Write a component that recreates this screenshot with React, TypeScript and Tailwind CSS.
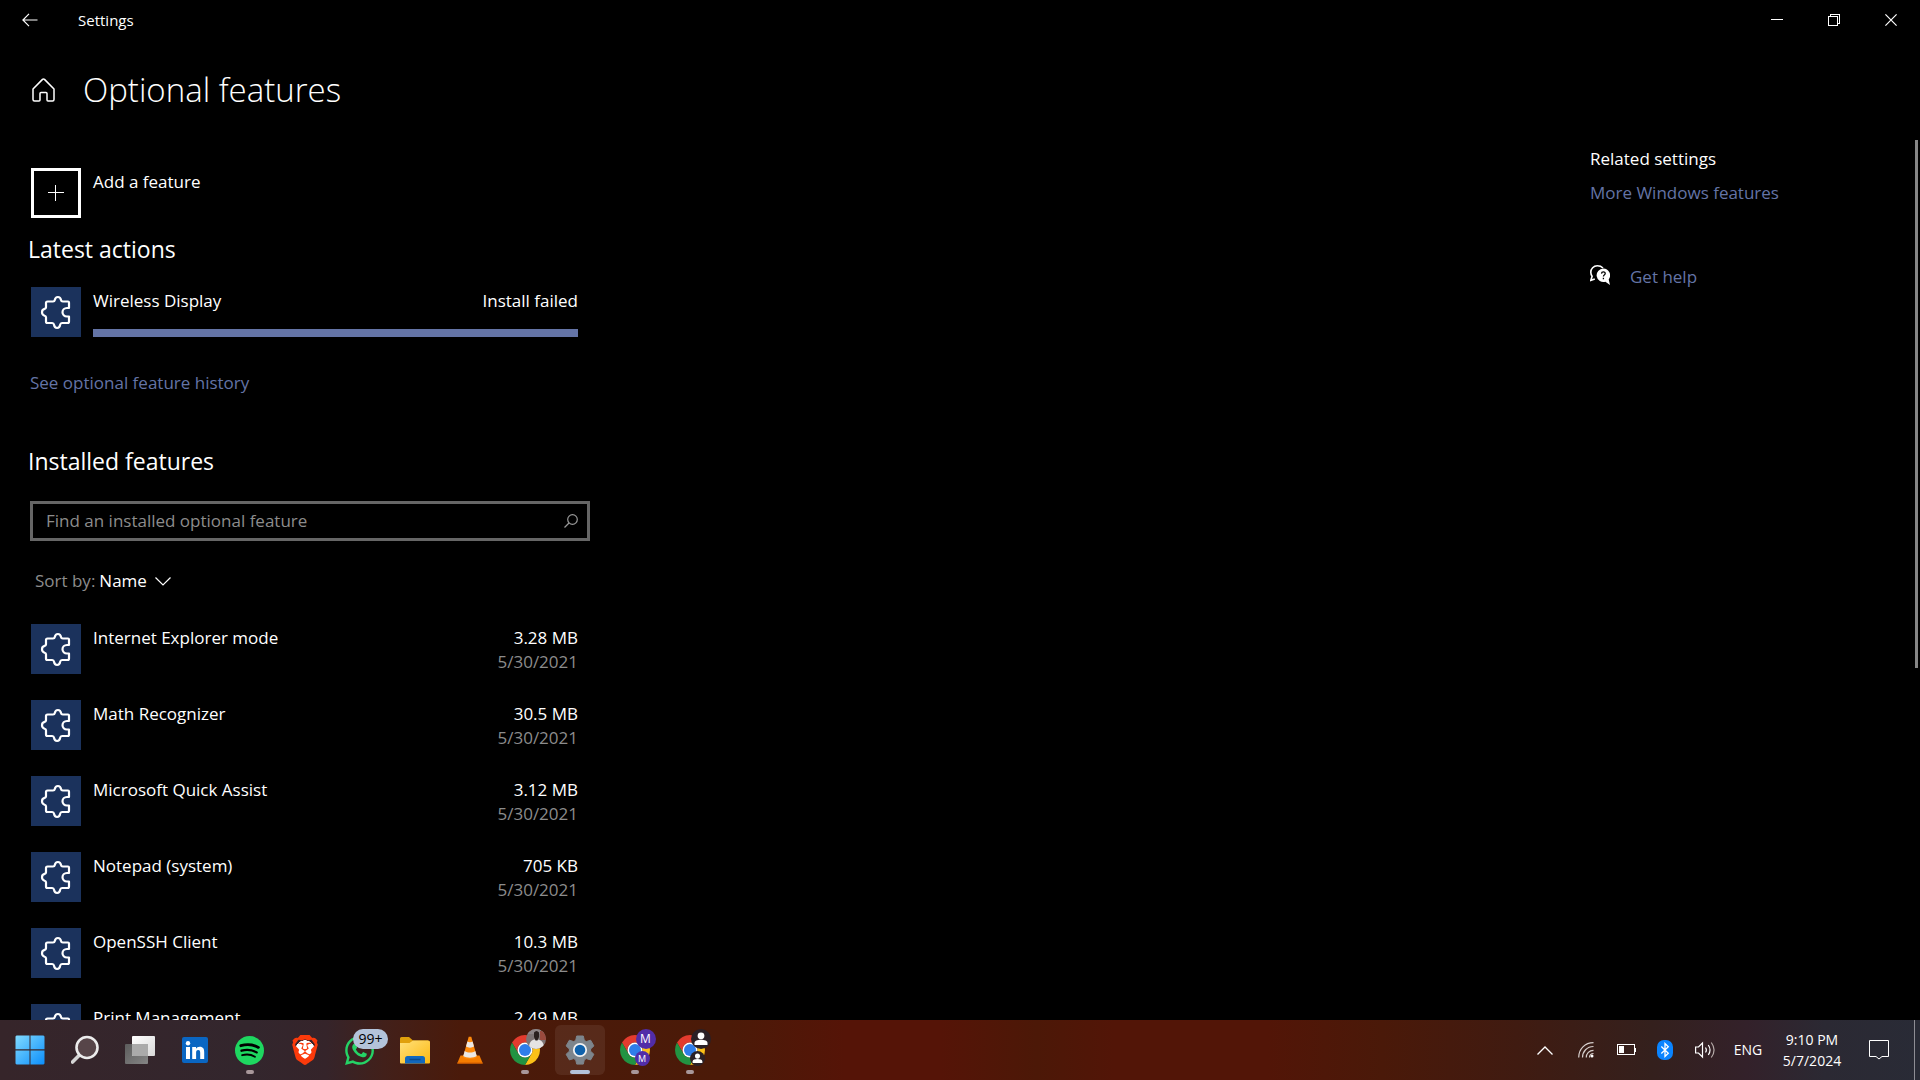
import { useState } from "react";
import type { ReactNode } from "react";
import { FaWhatsapp } from "react-icons/fa";
import { SiBrave } from "react-icons/si";

const installedFeatures = [
  { name: "Internet Explorer mode", size: "3.28 MB", date: "5/30/2021" },
  { name: "Math Recognizer", size: "30.5 MB", date: "5/30/2021" },
  { name: "Microsoft Quick Assist", size: "3.12 MB", date: "5/30/2021" },
  { name: "Notepad (system)", size: "705 KB", date: "5/30/2021" },
  { name: "OpenSSH Client", size: "10.3 MB", date: "5/30/2021" },
  { name: "Print Management", size: "2.49 MB", date: "5/30/2021" },
];

const FeatureIcon = () => (
  <svg
    viewBox="0 0 50 50"
    className="size-[50px] shrink-0 bg-[#1b325c]"
    fill="none"
    stroke="white"
    strokeWidth="2.2"
    strokeLinejoin="round"
  >
    <path d="M15 16q0-1.500 1.500-1.500H22c1.200 0 1.600-.4 1.800-1.500.4-2.200 1.400-3 3.100-3s2.700.8 3.100 3c.2 1.100.6 1.500 1.800 1.500H37q1 0 1 1V21h-2c-2.700 0-4.500 2-4.500 4.300s1.800 4.200 4.500 4.200h2v5q0 1.500-1.500 1.500H31c-1.200 0-1.600.5-1.800 1.600-.4 2.400-1.400 3.400-3.100 3.400s-2.700-1-3.100-3.400c-.2-1.100-.6-1.600-1.800-1.600H16.500q-1.500 0-1.500-1.500v-4.200c0-1-.3-1.300-1.400-1.600-1.800-.5-2.600-1.800-2.600-3.400s.8-2.900 2.600-3.400c1.100-.3 1.400-.6 1.400-1.600z" />
  </svg>
);

/* Title bar */
const TitleBar = () => (
  <header className="flex h-10 shrink-0 items-center pr-px">
    <button type="button" aria-label="Back" className="flex h-10 w-[60px] items-center justify-center">
      <svg width="16" height="14" viewBox="0 0 16 14" fill="none" stroke="white" strokeWidth="1.2">
        <path d="M15.500 7H1M7 .8.9 7 7 13.200" />
      </svg>
    </button>
    <span className="ml-[18px] text-[15px]">Settings</span>
    <div className="ml-auto flex">
      <button type="button" aria-label="Minimize" className="flex h-10 w-[57px] items-center justify-center">
        <svg width="12" height="12" shapeRendering="crispEdges" stroke="white">
          <path d="M0 5.500h12" />
        </svg>
      </button>
      <button type="button" aria-label="Restore" className="flex h-10 w-[57px] items-center justify-center">
        <svg width="12" height="12" shapeRendering="crispEdges" fill="none" stroke="white">
          <path d="M.5 2.500h9v9h-9zM2.500 2.500v-2h9v9h-2" />
        </svg>
      </button>
      <button type="button" aria-label="Close" className="flex h-10 w-[57px] items-center justify-center">
        <svg width="12" height="12" fill="none" stroke="white" strokeWidth="1.2">
          <path d="m.4.4 11.200 11.200M11.600.4.4 11.600" />
        </svg>
      </button>
    </div>
  </header>
);

const RelatedSettings = () => (
  <aside className="w-[325px] shrink-0 pt-[7px]">
    <h2 className="text-[17px] leading-6">Related settings</h2>
    <a href="#" className="mt-[10px] block text-[17px] leading-6 text-[#6474a6]">
      More Windows features
    </a>
    <div className="mt-[60px] flex items-start gap-5">
      <svg width="20" height="20" viewBox="0 0 20 20">
        <path
          d="M13 3C11.500 1.500 9.500.8 7.300.8 3.500.8.8 3.700.8 7.300c0 1.500.5 2.900 1.300 4L.8 15.300l4-1.300"
          fill="none"
          stroke="white"
          strokeWidth="1.600"
        />
        <path d="M13.300 3.500a6.800 6.800 0 0 1 5.400 10.900L20 20l-4.600-3.200A6.800 6.800 0 1 1 13.300 3.500z" fill="white" />
        <path
          d="M11.500 8.600c.1-2.400 3.700-2.300 3.700-.2 0 1.500-1.800 1.500-1.800 3.200M13.400 12.800v1.500"
          fill="none"
          stroke="black"
          strokeWidth="1.300"
        />
      </svg>
      <a href="#" className="text-[17px] leading-6 text-[#6474a6]">
        Get help
      </a>
    </div>
  </aside>
);

const OptionalFeatures = () => {
  const [query, setQuery] = useState("");
  const [sort, setSort] = useState("Name");

  return (
    <main className="min-w-0 flex-1 pl-[31px] pt-7">
      <button type="button" className="flex items-start gap-3 text-left">
        <span className="flex size-[50px] items-center justify-center border-3 border-white">
          <svg width="16" height="16" shapeRendering="crispEdges" stroke="white">
            <path d="M7.500 0v16M0 7.500h16" />
          </svg>
        </span>
        <span className="pt-[2px] text-[17px] leading-6">Add a feature</span>
      </button>

      {/* Latest actions */}
      <h2 className="-ml-[3px] mt-[15px] text-[23px] leading-8">Latest actions</h2>
      <div className="mt-[22px] flex w-[547px] gap-3">
        <FeatureIcon />
        <div className="flex flex-1 flex-col justify-between pt-[2px]">
          <div className="flex justify-between text-[17px] leading-6">
            <span>Wireless Display</span>
            <span>Install failed</span>
          </div>
          <div
            role="progressbar"
            aria-label="Wireless Display"
            aria-valuenow={100}
            className="h-2 bg-[#6474a6]"
          />
        </div>
      </div>
      <a href="#" className="-ml-px mt-[34px] block w-fit text-[17px] leading-6 text-[#6474a6]">
        See optional feature history
      </a>

      {/* Installed features */}
      <h2 className="-ml-[3px] mt-[50px] text-[23px] leading-8">Installed features</h2>
      <div className="mt-6 -ml-px flex h-10 w-[560px] items-center border-3 border-[#666] pl-[13px] pr-[9px]">
        <input
          type="text"
          aria-label="Find an installed optional feature"
          placeholder="Find an installed optional feature"
          value={query}
          onChange={(e) => setQuery(e.target.value)}
          className="min-w-0 flex-1 bg-transparent text-[17px] text-white outline-none placeholder:text-[#8c8c8c]"
        />
        <button type="button" aria-label="Search">
          <svg width="14" height="14" fill="none" stroke="#999" strokeWidth="1.200">
            <circle cx="8.500" cy="5.500" r="4.800" />
            <path d="M5 9 .5 13.500" />
          </svg>
        </button>
      </div>

      <div className="mt-7 flex items-center pl-1 text-[17px] leading-6">
        <label htmlFor="sort" className="text-[#8c8c8c]">
          Sort by:
        </label>
        <div className="relative flex items-center">
          <select
            id="sort"
            value={sort}
            onChange={(e) => setSort(e.target.value)}
            className="appearance-none bg-black pl-1 pr-6 text-white outline-none"
          >
            <option>Name</option>
            <option>Size</option>
          </select>
          <svg
            width="16"
            height="9"
            className="pointer-events-none absolute right-0"
            fill="none"
            stroke="white"
            strokeWidth="1.200"
          >
            <path d="m.5.500 7.500 7.500L15.500.5" />
          </svg>
        </div>
      </div>

      <ul className="mt-[31px] flex w-[547px] flex-col gap-[26px]">
        {installedFeatures.map((feature) => (
          <li key={feature.name} className="flex h-[50px] gap-3 text-[17px] leading-6">
            <FeatureIcon />
            <span className="flex-1 pt-[2px]">{feature.name}</span>
            <div className="pt-[2px] text-right">
              <p>{feature.size}</p>
              <p className="text-[#8c8c8c]">{feature.date}</p>
            </div>
          </li>
        ))}
      </ul>
    </main>
  );
};

/* Taskbar icons */
const StartIcon = () => (
  <svg width="30" height="30" viewBox="0 0 30 30">
    <defs>
      <linearGradient id="start" x1="0" y1="0" x2="30" y2="30" gradientUnits="userSpaceOnUse">
        <stop stopColor="#83dcff" />
        <stop offset="1" stopColor="#0a8dfb" />
      </linearGradient>
    </defs>
    <path
      fill="url(#start)"
      d="M1.500.5H14.500v13.800H.5V1.500zM15.500.5h13l1 1v12.800h-14zM.5 15.500h14v14h-13l-1-1zM15.500 15.500h14v13l-1 1h-13z"
    />
  </svg>
);

const SearchIcon = () => (
  <svg width="28" height="30" viewBox="0 0 28 30" fill="none">
    <path d="m9.500 19-8 8" stroke="#d5d5d5" strokeWidth="3.600" strokeLinecap="round" />
    <circle cx="16" cy="12.500" r="10.500" fill="#574549" stroke="#ececec" strokeWidth="2.600" />
  </svg>
);

const TaskViewIcon = () => (
  <svg width="30" height="28" viewBox="0 0 30 28">
    <defs>
      <linearGradient id="tv-front" x1="0" y1="0" x2="1" y2="1">
        <stop stopColor="#fff" />
        <stop offset="1" stopColor="#d8d8d8" />
      </linearGradient>
      <linearGradient id="tv-back" x1="0" y1="0" x2="1" y2="1">
        <stop stopColor="#5c5c5c" />
        <stop offset="1" stopColor="#858585" />
      </linearGradient>
    </defs>
    <rect y="8" width="23" height="20" rx="1" fill="url(#tv-back)" />
    <rect x="7" width="23" height="20" rx="1" fill="url(#tv-front)" />
    <path d="M7 8h16v12H8q-1 0-1-1z" fill="#aaa" />
  </svg>
);

const LinkedInIcon = () => (
  <svg width="26" height="26" viewBox="0 0 26 26">
    <rect width="26" height="26" rx="2" fill="#0a66c2" />
    <g fill="white">
      <circle cx="6" cy="6.200" r="2.200" />
      <path d="M4 10h4v12H4zM10.200 10H14v1.700c.7-1.200 2-2 3.700-2 3.600 0 4.500 2.300 4.500 5.500V22h-4v-6c0-1.700-.3-3-2-3s-2.100 1.300-2.100 3v6h-3.900z" />
    </g>
  </svg>
);

const SpotifyIcon = () => (
  <svg width="29" height="29" viewBox="0 0 29 29" fill="none" stroke="black" strokeLinecap="round">
    <circle cx="14.500" cy="14.500" r="14.500" fill="#1ed760" stroke="none" />
    <path d="M5.800 9.700c6-1.700 12.500-1.100 17.600 1.700" strokeWidth="2.800" />
    <path d="M6.500 14.700c5.300-1.500 10.700-.8 15.200 1.700" strokeWidth="2.300" />
    <path d="M7.200 19.200c4.400-1.200 9-.7 12.700 1.500" strokeWidth="1.900" />
  </svg>
);

const BraveIcon = () => (
  <span className="flex size-[30px] items-center justify-center bg-[radial-gradient(circle,white_45%,transparent_46%)] text-[#fb3a0b]">
    <SiBrave size={30} />
  </span>
);

const WhatsAppIcon = () => (
  <span className="relative text-[#25d366]">
    <FaWhatsapp size={33} />
    <span className="absolute -right-3 -top-[5px] flex h-5 w-[35px] items-center justify-center rounded-full bg-[#b3c3da] text-sm text-black">
      99+
    </span>
  </span>
);

const ExplorerIcon = () => (
  <svg width="30" height="27" viewBox="0 0 30 27">
    <defs>
      <linearGradient id="folder" x1="0" y1="0" x2="1" y2="1">
        <stop stopColor="#ffe07a" />
        <stop offset="1" stopColor="#fcb912" />
      </linearGradient>
    </defs>
    <path d="M0 1.500Q0 0 1.500 0H9l4 3.500h15V12H0z" fill="#e0a00c" />
    <path d="M0 6h9.500L13 3.500h15.500Q30 3.500 30 5v20.500q0 1-1 1H1q-1 0-1-1z" fill="url(#folder)" />
    <path d="M5 21.500q0-2.500 2.500-2.500h15q2.500 0 2.500 2.500v5H5z" fill="#1268bd" />
    <path d="M9.500 22.500h11" stroke="#0b4a8c" strokeWidth="1.500" />
  </svg>
);

const VlcIcon = () => (
  <svg width="26" height="28" viewBox="0 0 26 28">
    <path d="M3.500 19.500h19L25.800 27.500H.2z" fill="#f57c00" />
    <path d="M11.700.8h2.600L20 21c-1.500 2.600-12.500 2.600-14 0z" fill="#ff8a0c" />
    <path d="M10.400 5.500c1.500 1 3.700 1 5.200 0l1.400 5c-2.300 1.500-5.700 1.500-8 0zM7.700 15c2.800 2 7.800 2 10.600 0l1.400 5c-3 2.300-10.400 2.300-13.400 0z" fill="#ebe8e6" />
    <path d="M.4 27h25.200" stroke="#d45c00" />
  </svg>
);

const ChromeIcon = () => (
  <svg width="30" height="30" viewBox="2 2 44 44">
    <path d="M4.950 13A22 22 0 0 1 43.050 13H24A11 11 0 0 0 14.470 29.500z" fill="#e33b2e" />
    <path d="M43.050 13A22 22 0 0 1 24 46L33.530 29.500A11 11 0 0 0 24 13z" fill="#fcc018" />
    <path d="M24 46A22 22 0 0 1 4.950 13L14.470 29.500A11 11 0 0 0 33.530 29.500z" fill="#229342" />
    <circle cx="24" cy="24" r="11" fill="white" />
    <circle cx="24" cy="24" r="8.800" fill="#2f7de9" />
  </svg>
);

const PhotoChromeIcon = () => (
  <span className="relative">
    <ChromeIcon />
    <svg width="20" height="20" viewBox="0 0 20 20" className="absolute -right-[6px] -top-[6px]">
      <defs>
        <clipPath id="avatar">
          <circle cx="10" cy="10" r="10" />
        </clipPath>
      </defs>
      <g clipPath="url(#avatar)">
        <rect width="20" height="20" fill="#7d7475" />
        <path d="M0 0h20v5H0z" fill="#8d8587" />
        <path d="M14 2h6v9h-6z" fill="#9b4a3d" />
        <path d="M3 20c0-7 2-9.500 7-9.500s8 2 8 9.500z" fill="#e5e3e3" />
        <path d="M8 3.500q2.500-3 5 0v4.500l-1.500 3.500h-2L8 8z" fill="#29201f" />
      </g>
    </svg>
  </span>
);

const ProfileChromeIcon = () => (
  <span className="relative">
    <ChromeIcon />
    <span className="absolute -right-[6px] -top-[6px] flex size-5 items-center justify-center rounded-full bg-[#512da8] text-xs text-white">
      M
    </span>
    <span className="absolute -bottom-px right-0 flex size-[15px] items-center justify-center rounded-full bg-[#512da8] text-[9px] text-white">
      M
    </span>
  </span>
);

const Person = ({ size }: { size: number }) => (
  <svg width={size} height={size} viewBox="0 0 20 20">
    <circle cx="10" cy="10" r="10" fill="#2b2026" />
    <circle cx="10" cy="6.800" r="3.400" fill="white" />
    <path d="M3.500 16v-2c0-2.200 3-3.200 6.500-3.200s6.500 1 6.500 3.200v2z" fill="white" />
  </svg>
);

const GuestChromeIcon = () => (
  <span className="relative">
    <ChromeIcon />
    <span className="absolute -right-[6px] -top-[6px]">
      <Person size={20} />
    </span>
    <span className="absolute -bottom-px right-0">
      <Person size={15} />
    </span>
  </span>
);

const SettingsIcon = () => (
  <svg width="30" height="30" viewBox="0 0 30 30">
    <path
      d="M11.700 1h6.600l1 4.400 2 1.200 4.300-1.400 3.300 5.700-3.300 3.100v2.200l3.300 3.100-3.300 5.600-4.300-1.300-2 1.200-1 4.300h-6.600l-1-4.300-2-1.200-4.300 1.300-3.300-5.600L4.400 16.200V14L1.100 10.900l3.300-5.700 4.300 1.400 2-1.200z"
      fill="#7d858c"
      stroke="#7d858c"
      strokeLinejoin="round"
    />
    <circle cx="15" cy="15" r="6.200" fill="#0f62ac" stroke="#f1f1f1" strokeWidth="1.800" />
  </svg>
);

const taskbarApps: { name: string; icon: ReactNode; state?: "open" | "active" }[] = [
  { name: "Start", icon: <StartIcon /> },
  { name: "Search", icon: <SearchIcon /> },
  { name: "Task View", icon: <TaskViewIcon /> },
  { name: "LinkedIn", icon: <LinkedInIcon /> },
  { name: "Spotify", icon: <SpotifyIcon />, state: "open" },
  { name: "Brave", icon: <BraveIcon /> },
  { name: "WhatsApp", icon: <WhatsAppIcon /> },
  { name: "File Explorer", icon: <ExplorerIcon /> },
  { name: "VLC media player", icon: <VlcIcon /> },
  { name: "Google Chrome", icon: <PhotoChromeIcon />, state: "open" },
  { name: "Settings", icon: <SettingsIcon />, state: "active" },
  { name: "Google Chrome - M", icon: <ProfileChromeIcon />, state: "open" },
  { name: "Google Chrome - Person 1", icon: <GuestChromeIcon />, state: "open" },
];

const SystemTray = () => (
  <div className="ml-auto flex items-center text-white">
    <button type="button" aria-label="Show hidden icons" className="flex w-10 justify-center">
      <svg width="16" height="9" fill="none" stroke="white" strokeWidth="1.300">
        <path d="M.5 8.500 8 1l7.500 7.500" />
      </svg>
    </button>
    <button type="button" aria-label="Network" className="flex w-[42px] justify-center">
      <svg width="16" height="16" viewBox="0 0 16 16" fill="none" stroke="#d8d0ce" strokeWidth="1.200">
        <path d="M.7 15.500C.7 7 7 .7 15.500.7M4.500 15.500C4.500 9.500 9 4.500 15.500 4.500M8.300 15.500c0-4 3-7.200 7.200-7.200M11.500 15.500c0-2 1.500-4 4-4" />
        <circle cx="14" cy="14" r="1.500" fill="white" stroke="none" />
      </svg>
    </button>
    <button type="button" aria-label="Battery" className="flex w-[38px] justify-center">
      <svg width="19" height="12" shapeRendering="crispEdges" fill="none" stroke="white">
        <path d="M.5.500h17v10H.5zM18.500 3.500v4" />
        <path d="M2 2h5v7H2z" fill="white" stroke="none" />
      </svg>
    </button>
    <button type="button" aria-label="Bluetooth" className="flex w-10 justify-center">
      <svg width="16" height="20" viewBox="0 0 16 20" fill="none" stroke="white" strokeWidth="1.300">
        <rect width="16" height="20" rx="7" fill="#0a84ff" stroke="none" />
        <path d="m4.300 6.500 7 6.700L8 16.500v-13l3.300 3.300-7 6.700" />
      </svg>
    </button>
    <button type="button" aria-label="Volume" className="flex w-10 justify-center">
      <svg width="21" height="18" viewBox="0 0 21 18" fill="none" stroke="white" strokeWidth="1.200">
        <path d="M.6 6h2.900l4-4v14l-4-4H.6z" />
        <path d="M10.500 6.500q1.800 2.500 0 5M13.300 4q3.500 5 0 10" />
        <path d="M16.300 1.500q5.500 7.500 0 15" stroke="#b5aaa8" />
      </svg>
    </button>
    <button type="button" className="w-[46px] text-sm">
      ENG
    </button>
    <button type="button" className="w-[82px] text-center text-sm leading-[21px]">
      <span className="block">9:10 PM</span>
      <span className="block">5/7/2024</span>
    </button>
    <button type="button" aria-label="Notifications" className="flex w-[52px] justify-center">
      <svg width="20" height="20" viewBox="0 0 20 20" fill="none" stroke="white">
        <path d="M.5.500h19v16h-6.500L10 19l-3-2.500H.5z" />
      </svg>
    </button>
    <button
      type="button"
      aria-label="Show desktop"
      className="ml-[9px] h-[60px] w-[6px] border-l border-[#8e8d94]"
    />
  </div>
);

const Taskbar = () => (
  <footer className="flex h-[60px] shrink-0 items-center bg-[linear-gradient(90deg,#36252a_0%,#33262d_13%,#35242a_17%,#42201a_20%,#4a1a0a_24%,#4b1a08_38%,#551407_44%,#551407_49%,#4c1807_54%,#521507_58%,#521507_66%,#4a1909_72%,#401b11_79%,#34201d_86%,#33212a_91%,#2b2933_95%,#292b36_100%)] pl-[2px]">
    {taskbarApps.map((app) => (
      <button
        key={app.name}
        type="button"
        aria-label={app.name}
        className="flex h-[60px] w-[55px] items-center justify-center"
      >
        <span
          className={`relative flex size-[50px] items-center justify-center rounded-md ${
            app.state === "active" ? "bg-white/7" : ""
          }`}
        >
          {app.icon}
          {app.state && (
            <span
              className={`absolute bottom-px h-1 rounded-full ${
                app.state === "active" ? "w-5 bg-[#b3c3da]" : "w-2 bg-[#a8979a]"
              }`}
            />
          )}
        </span>
      </button>
    ))}
    <SystemTray />
  </footer>
);

export default function App() {
  return (
    <div className="flex h-screen flex-col overflow-hidden bg-black font-['Open_Sans',sans-serif] text-white">
      <TitleBar />
      <div className="flex h-[100px] shrink-0 items-center gap-7 pl-8">
        <button type="button" aria-label="Home">
          <svg width="23" height="24" viewBox="0 0 23 24" fill="none" stroke="white" strokeWidth="1.500">
            <path
              d="M1 11 10.500 1.400q1-.9 2 0L22 11v10.500q0 1.500-1.500 1.500H16q-1 0-1-1v-6.500q0-1-1-1H9q-1 0-1 1V22q0 1-1 1H2.500Q1 23 1 21.500z"
              strokeLinejoin="round"
            />
          </svg>
        </button>
        <h1 className="text-[33px] font-light">Optional features</h1>
      </div>
      <div className="flex min-h-0 flex-1 overflow-hidden">
        <OptionalFeatures />
        <RelatedSettings />
        {/* Scrollbar thumb */}
        <div className="mr-[2px] h-3/5 w-[3px] shrink-0 bg-[#868686]" />
      </div>
      <Taskbar />
    </div>
  );
}
